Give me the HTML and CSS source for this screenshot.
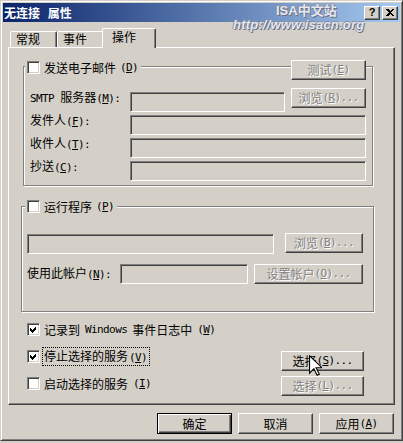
FILE: index.html
```html
<!DOCTYPE html>
<html lang="zh-CN">
<head>
    <meta charset="UTF-8">
    <title>无连接 属性</title>
    <link rel="stylesheet" href="styles.css">
</head>
<body>

<div class="win">
    <div class="titlebar">
        <span class="title">无连接 属性</span>
        <div class="caption-btns">
            <span class="cap-btn help">?</span>
            <span class="cap-btn close">
                <svg width="8" height="7" viewBox="0 0 8 7" shape-rendering="crispEdges"><path d="M0 0h2l2 2 2-2h2L5 3.5 8 7H6L4 5 2 7H0l3-3.5z"/></svg>
            </span>
        </div>
    </div>

    <!-- watermark stamped over the screenshot -->
    <div class="watermark">
        <div class="wm-top">ISA中文站</div>
        <div class="wm-url">http://www.isacn.org</div>
    </div>

    <div class="content">
        <div class="tabs">
            <div class="tab">常规</div>
            <div class="tab">事件</div>
            <div class="tab active">操作</div>
        </div>

        <div class="panel">
            <div class="grp grp-mail">
                <div class="grp-head">
                    <label class="legend"><span class="chk"></span>发送电子邮件<span class="en">(<u>D</u>)</span></label>
                    <button class="btn test" disabled>测试<span class="en">(<u>E</u>)</span></button>
                </div>
                <div class="grp-body">
                    <div class="row">
                        <label class="lbl"><span class="en">SMTP </span>服务器<span class="en">(<u>M</u>):</span></label>
                        <input class="field" disabled>
                        <button class="btn browse" disabled>浏览<span class="en">(<u>R</u>)...</span></button>
                    </div>
                    <div class="row">
                        <label class="lbl">发件人<span class="en">(<u>F</u>):</span></label>
                        <input class="field" disabled>
                    </div>
                    <div class="row">
                        <label class="lbl">收件人<span class="en">(<u>T</u>):</span></label>
                        <input class="field" disabled>
                    </div>
                    <div class="row">
                        <label class="lbl">抄送<span class="en">(<u>C</u>):</span></label>
                        <input class="field" disabled>
                    </div>
                </div>
            </div>

            <div class="grp grp-run">
                <div class="grp-head">
                    <label class="legend"><span class="chk"></span>运行程序<span class="en">(<u>P</u>)</span></label>
                </div>
                <div class="grp-body">
                    <div class="row">
                        <input class="field" disabled>
                        <button class="btn browse2" disabled>浏览<span class="en">(<u>B</u>)...</span></button>
                    </div>
                    <div class="row">
                        <label class="lbl lbl-acct">使用此帐户<span class="en">(<u>N</u>):</span></label>
                        <input class="field acct" disabled>
                        <button class="btn setacct" disabled>设置帐户<span class="en">(<u>O</u>)...</span></button>
                    </div>
                </div>
            </div>

            <div class="opts">
                <div class="checks">
                    <label class="check"><span class="chk"><svg width="9" height="9" viewBox="0 0 9 9" shape-rendering="crispEdges"><path d="M1 3l2 2 4-4v3l-4 4-2-2z"/></svg></span>记录到 <span class="en">Windows</span> 事件日志中<span class="en">(<u>W</u>)</span></label>
                    <label class="check"><span class="chk"><svg width="9" height="9" viewBox="0 0 9 9" shape-rendering="crispEdges"><path d="M1 3l2 2 4-4v3l-4 4-2-2z"/></svg></span><span class="focus">停止选择的服务<span class="en">(<u>V</u>)</span></span></label>
                    <label class="check"><span class="chk"></span>启动选择的服务<span class="en">(<u>I</u>)</span></label>
                </div>
                <div class="opt-btns">
                    <button class="btn pick">选择<span class="en">(<u>S</u>)...</span></button>
                    <button class="btn pick" disabled>选择<span class="en">(<u>L</u>)...</span></button>
                </div>
            </div>
        </div>

        <div class="dlg-btns">
            <button class="btn default">确定</button>
            <button class="btn">取消</button>
            <button class="btn">应用<span class="en">(<u>A</u>)</span></button>
        </div>
    </div>

    <svg class="cursor" width="13" height="21" viewBox="0 0 12 19"><path d="M0.5 0.5v16l4-4 3 6 2-1-3-6h5.5z" fill="#fff" stroke="#000" stroke-width="1"/></svg>
</div>

</body>
</html>
```

FILE: styles.css
```css
* {
    margin: 0;
    padding: 0;
    box-sizing: border-box;
}

html, body {
    background: #d4d0c8;
}

body {
    font-family: "Noto Sans CJK SC", sans-serif;
    font-size: 12px;
    color: #000;
}

.en {
    font-family: "DejaVu Sans Mono", monospace;
    font-size: 11px;
    letter-spacing: -0.6px;
}

/* Window frame */
.win {
    position: relative;
    width: 403px;
    height: 441px;
    border: 1px solid;
    border-color: #d4d0c8 #404040 #404040 #d4d0c8;
    box-shadow: inset 1px 1px 0 #fff, inset -1px -1px 0 #808080;
    padding: 2px;
}

.titlebar {
    height: 19px;
    display: flex;
    align-items: center;
    justify-content: space-between;
    padding: 0 2px 0 1px;
    background: linear-gradient(to right, #0a246a, #a6caf0);
}

.title {
    color: #fff;
    font-weight: bold;
    line-height: 14px;
    word-spacing: 5px;
}

.caption-btns {
    display: flex;
    gap: 2px;
}

.cap-btn {
    width: 16px;
    height: 14px;
    display: flex;
    align-items: center;
    justify-content: center;
    background: #d4d0c8;
    border: 1px solid;
    border-color: #fff #404040 #404040 #fff;
    box-shadow: inset -1px -1px 0 #808080;
}

.cap-btn.help {
    font-family: "Liberation Sans", sans-serif;
    font-weight: bold;
    font-size: 11px;
    line-height: 11px;
}

.watermark {
    position: absolute;
    left: 232px;
    top: 2px;
    color: #e4e8f4;
    font-family: "Liberation Sans", "Noto Sans CJK SC", sans-serif;
    font-weight: bold;
    text-shadow: 1px 1px 0 #6c7080, -1px 0 0 #8a8e9c, 0 -1px 0 #8a8e9c;
    pointer-events: none;
}

.wm-top {
    font-size: 13px;
    line-height: 15px;
    padding-left: 43px;
}

.wm-url {
    font-size: 13px;
    font-style: italic;
    line-height: 14px;
    letter-spacing: 0.2px;
}

/* Tabs and panel */
.content {
    padding: 6px 5px 0 5px;
}

.tabs {
    position: relative;
    z-index: 1;
    display: flex;
    align-items: flex-end;
    height: 19px;
    padding-left: 2px;
}

.tab {
    height: 16px;
    line-height: 14px;
    padding: 0 16px 0 5px;
    background: #d4d0c8;
    border: 1px solid;
    border-bottom: none;
    border-color: #fff #404040 transparent #fff;
    border-radius: 2px 2px 0 0;
    box-shadow: inset -1px 0 0 #808080;
}

.tab.active {
    height: 20px;
    line-height: 15px;
    margin: 0 -2px -1px -2px;
    padding: 0 19px 0 9px;
}

.panel {
    height: 358px;
    padding-left: 14px;
    border: 1px solid;
    border-color: #fff #404040 #404040 #fff;
    box-shadow: inset -1px -1px 0 #808080;
}

/* Group boxes */
.grp {
    border: 1px solid #808080;
    box-shadow: inset 1px 1px 0 #fff, 1px 1px 0 #fff;
}

.grp-mail {
    width: 350px;
    margin-top: 18px;
}

.grp-run {
    width: 353px;
    margin-top: 20px;
    margin-left: -2px;
}

.grp-head {
    display: flex;
    justify-content: space-between;
    align-items: flex-start;
    margin-top: -7px;
}

.grp-run .grp-head {
    margin-top: -8px;
}

.legend {
    display: flex;
    align-items: center;
    gap: 4px;
    height: 15px;
    line-height: 15px;
    margin-left: 1px;
    padding: 0 3px 0 2px;
    background: #d4d0c8;
}

.grp-run .legend {
    margin-left: 3px;
}

.grp-body {
    display: flex;
    flex-direction: column;
    gap: 3px;
    padding: 12px 6px 4px 6px;
}

.grp-run .grp-body {
    gap: 10px;
    padding: 20px 10px 27px 5px;
}

.row {
    display: flex;
    align-items: flex-start;
    height: 20px;
}

.lbl {
    width: 100px;
    line-height: 14px;
    margin-top: -2px;
}

.lbl-acct {
    width: 93px;
    align-self: center;
    margin-top: 0;
}

.field {
    appearance: none;
    flex: 1;
    min-width: 0;
    height: 20px;
    background: #d4d0c8;
    border: 1px solid;
    border-color: #808080 #fff #fff #808080;
    box-shadow: inset 1px 1px 0 #404040;
    font: inherit;
}

.field.acct {
    flex: none;
    width: 128px;
}

/* Checkboxes */
.chk {
    flex: none;
    width: 13px;
    height: 13px;
    display: flex;
    align-items: center;
    justify-content: center;
    background: #fff;
    border: 1px solid;
    border-color: #808080 #fff #fff #808080;
    box-shadow: inset 1px 1px 0 #404040, inset -1px -1px 0 #d4d0c8;
}

.opts {
    display: flex;
    justify-content: space-between;
    margin-top: 11px;
    padding: 0 30px 0 4px;
}

.checks {
    display: flex;
    flex-direction: column;
    gap: 14px;
}

.check {
    display: flex;
    align-items: center;
    gap: 4px;
    height: 13px;
    line-height: 13px;
    white-space: nowrap;
}

.check .en {
    margin: 0 1px;
}

.focus {
    outline: 1px dotted #000;
    outline-offset: 1px;
}

.opt-btns {
    display: flex;
    flex-direction: column;
    gap: 5px;
    margin-top: 28px;
}

/* Buttons */
.btn {
    height: 20px;
    display: flex;
    align-items: center;
    justify-content: center;
    font: inherit;
    line-height: 14px;
    color: #000;
    background: #d4d0c8;
    border: 1px solid;
    border-color: #fff #404040 #404040 #fff;
    box-shadow: inset -1px -1px 0 #808080;
    white-space: nowrap;
}

.btn:disabled {
    color: #808080;
    text-shadow: 1px 1px 0 #fff;
}

.btn.test {
    width: 75px;
    margin-right: 6px;
}

.btn.browse {
    width: 75px;
    margin-left: 6px;
    margin-top: -4px;
}

.btn.browse2 {
    width: 78px;
    margin-left: 11px;
    margin-top: -1px;
}

.btn.setacct {
    width: 109px;
    margin-left: 6px;
}

.btn.pick {
    width: 83px;
}

.dlg-btns {
    display: flex;
    justify-content: flex-end;
    gap: 6px;
    margin-top: 8px;
    padding-right: 1px;
}

.dlg-btns .btn {
    width: 75px;
    height: 21px;
}

.btn.default {
    border-color: #000;
    box-shadow: inset 1px 1px 0 #fff, inset -1px -1px 0 #404040, inset -2px -2px 0 #808080;
}

.cursor {
    position: absolute;
    left: 308px;
    top: 354px;
}
```
